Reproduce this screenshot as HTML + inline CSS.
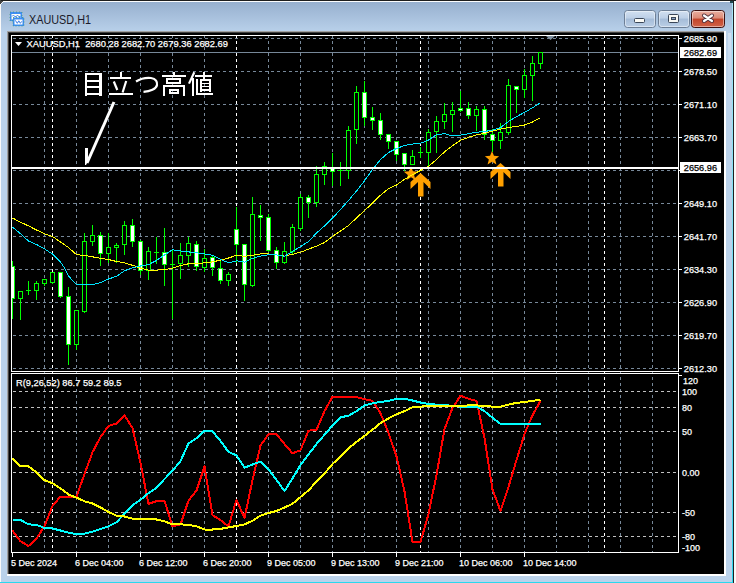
<!DOCTYPE html><html><head><meta charset="utf-8"><style>
html,body{margin:0;padding:0;width:736px;height:583px;overflow:hidden;background:#ffffff;}
svg{display:block;}
text{font-family:"Liberation Sans",sans-serif;}
</style></head><body>
<svg width="736" height="583" viewBox="0 0 736 583">
<defs>
<linearGradient id="tg" x1="0" y1="0" x2="0" y2="1"><stop offset="0" stop-color="#97b0cf"/><stop offset="1" stop-color="#bad2eb"/></linearGradient>
<linearGradient id="bg1" x1="0" y1="0" x2="0" y2="1"><stop offset="0" stop-color="#d3e1f1"/><stop offset="0.45" stop-color="#bccfe6"/><stop offset="0.5" stop-color="#a5bcd8"/><stop offset="1" stop-color="#bcd0e7"/></linearGradient>
<linearGradient id="bg2" x1="0" y1="0" x2="0" y2="1"><stop offset="0" stop-color="#eab0a2"/><stop offset="0.45" stop-color="#dc8a76"/><stop offset="0.5" stop-color="#c3452b"/><stop offset="1" stop-color="#d0644a"/></linearGradient>
<clipPath id="cm"><rect x="12" y="36" width="666" height="335"/></clipPath>
<clipPath id="ci"><rect x="12" y="374" width="666" height="178"/></clipPath>
</defs>
<linearGradient id="rg" x1="0" y1="0" x2="0" y2="1"><stop offset="0" stop-color="#a8e6f8"/><stop offset="1" stop-color="#2ed6ef"/></linearGradient>
<rect x="0" y="0" width="736" height="583" fill="#f4f4f4"/>
<rect x="0" y="0" width="734" height="583" fill="#bad2eb"/>
<rect x="0" y="2" width="734" height="31" fill="url(#tg)"/>
<rect x="0" y="0" width="736" height="1" fill="#1e1e1e"/>
<rect x="0" y="0" width="1" height="4" fill="#404040"/>
<rect x="3" y="1" width="727" height="1" fill="#fcfdfe"/>
<rect x="1" y="3" width="1" height="1" fill="#e8f0f8"/>
<rect x="2" y="2" width="1" height="1" fill="#e8f0f8"/>
<rect x="1" y="1" width="2" height="1" fill="#505050"/>
<rect x="1" y="2" width="1" height="1" fill="#505050"/>
<rect x="0" y="4" width="1" height="579" fill="#fafafa"/>
<linearGradient id="band" x1="0" y1="0" x2="0" y2="1"><stop offset="0" stop-color="#d4e4f4" stop-opacity="0.9"/><stop offset="1" stop-color="#bad2eb" stop-opacity="0"/></linearGradient>
<rect x="728" y="33" width="3" height="90" fill="url(#band)"/>
<rect x="732" y="3" width="1" height="580" fill="url(#rg)"/>
<rect x="733" y="0" width="1" height="583" fill="#202020"/>
<rect x="730" y="1" width="3" height="2" fill="#204850"/>
<rect x="734" y="1" width="2" height="582" fill="#f8f8f8"/>
<rect x="0" y="582" width="733" height="1" fill="#2ad8ee"/>
<rect x="7" y="31" width="719" height="545" fill="#ffffff"/>
<rect x="7" y="31" width="717" height="1" fill="#a0a0a0"/>
<rect x="7" y="31" width="1" height="543" fill="#a0a0a0"/>
<rect x="8" y="32" width="716" height="1" fill="#404040"/>
<rect x="8" y="32" width="1" height="542" fill="#404040"/>
<rect x="9" y="33" width="715" height="541" fill="#000000"/>
<rect x="10" y="12" width="12" height="9" fill="#3e8ef4"/>
<rect x="10" y="12" width="12" height="9" fill="none" stroke="#3a9a6a" stroke-width="1" stroke-dasharray="1 2" opacity="0.7"/>
<rect x="11.5" y="14" width="9" height="5.5" fill="#fffef4"/>
<path d="M12 16.5 L13.5 15 L14.5 16.5 L16.5 16.5 L17.5 15 L18.5 16.5 L20.5 16.5" stroke="#4a8ef0" stroke-width="1" fill="none"/>
<rect x="13" y="17.5" width="11" height="8.5" fill="#3e8ef4"/>
<rect x="13" y="17.5" width="11" height="8.5" fill="none" stroke="#3a9a6a" stroke-width="1" stroke-dasharray="1 2" opacity="0.7"/>
<rect x="14.5" y="19.5" width="8" height="5" fill="#ffffff"/>
<path d="M15.3 20.3 L17.3 23.3 L18.8 20.8 L20.3 23.3 L21.8 21.3" stroke="#3b7de8" stroke-width="1" fill="none"/>
<text x="29" y="23.9" font-size="12.5" fill="#1a1a2a" textLength="62" lengthAdjust="spacingAndGlyphs">XAUUSD,H1</text>
<rect x="624.5" y="10.5" width="31" height="17" rx="3" ry="3" fill="url(#bg1)" stroke="#6d7f96"/>
<rect x="625.5" y="11.5" width="29" height="15" rx="2" ry="2" fill="none" stroke="rgba(255,255,255,0.45)"/>
<rect x="658.5" y="10.5" width="31" height="17" rx="3" ry="3" fill="url(#bg1)" stroke="#6d7f96"/>
<rect x="659.5" y="11.5" width="29" height="15" rx="2" ry="2" fill="none" stroke="rgba(255,255,255,0.45)"/>
<rect x="691.5" y="10.5" width="33" height="17" rx="3" ry="3" fill="url(#bg2)" stroke="#3c1010"/>
<rect x="692.5" y="11.5" width="31" height="15" rx="2" ry="2" fill="none" stroke="rgba(255,255,255,0.45)"/>
<rect x="634.5" y="18.5" width="10" height="4" rx="1" fill="#fbfbf6" stroke="#3a4658"/>
<rect x="668.5" y="14.5" width="10" height="8" rx="1" fill="#f8f8f4" stroke="#3a4658" stroke-width="1"/>
<rect x="671.5" y="17.5" width="4" height="2" fill="#8aa0c0" stroke="#3a4658" stroke-width="1"/>
<path d="M704 15.5 L712 21 M712 15.5 L704 21" stroke="#50303a" stroke-width="4" stroke-linecap="round"/>
<path d="M704 15.5 L712 21 M712 15.5 L704 21" stroke="#ffffff" stroke-width="2.2" stroke-linecap="round"/>
<g shape-rendering="crispEdges">
<line x1="13" y1="38.5" x2="678" y2="38.5" stroke="#778899" stroke-dasharray="3 3"/>
<line x1="13" y1="71.5" x2="678" y2="71.5" stroke="#778899" stroke-dasharray="3 3"/>
<line x1="13" y1="104.5" x2="678" y2="104.5" stroke="#778899" stroke-dasharray="3 3"/>
<line x1="13" y1="137.5" x2="678" y2="137.5" stroke="#778899" stroke-dasharray="3 3"/>
<line x1="13" y1="170.5" x2="678" y2="170.5" stroke="#778899" stroke-dasharray="3 3"/>
<line x1="13" y1="203.5" x2="678" y2="203.5" stroke="#778899" stroke-dasharray="3 3"/>
<line x1="13" y1="236.5" x2="678" y2="236.5" stroke="#778899" stroke-dasharray="3 3"/>
<line x1="13" y1="269.5" x2="678" y2="269.5" stroke="#778899" stroke-dasharray="3 3"/>
<line x1="13" y1="302.5" x2="678" y2="302.5" stroke="#778899" stroke-dasharray="3 3"/>
<line x1="13" y1="335.5" x2="678" y2="335.5" stroke="#778899" stroke-dasharray="3 3"/>
<line x1="13" y1="368.5" x2="678" y2="368.5" stroke="#778899" stroke-dasharray="3 3"/>
<line x1="44.5" y1="35" x2="44.5" y2="371" stroke="#778899" stroke-dasharray="3 3"/>
<line x1="44.5" y1="371" x2="44.5" y2="552" stroke="#778899" stroke-dasharray="3 3"/>
<line x1="76.5" y1="35" x2="76.5" y2="371" stroke="#778899" stroke-dasharray="3 3"/>
<line x1="76.5" y1="371" x2="76.5" y2="552" stroke="#778899" stroke-dasharray="3 3"/>
<line x1="108.5" y1="35" x2="108.5" y2="371" stroke="#778899" stroke-dasharray="3 3"/>
<line x1="108.5" y1="371" x2="108.5" y2="552" stroke="#778899" stroke-dasharray="3 3"/>
<line x1="140.5" y1="35" x2="140.5" y2="371" stroke="#778899" stroke-dasharray="3 3"/>
<line x1="140.5" y1="371" x2="140.5" y2="552" stroke="#778899" stroke-dasharray="3 3"/>
<line x1="172.5" y1="35" x2="172.5" y2="371" stroke="#778899" stroke-dasharray="3 3"/>
<line x1="172.5" y1="371" x2="172.5" y2="552" stroke="#778899" stroke-dasharray="3 3"/>
<line x1="204.5" y1="35" x2="204.5" y2="371" stroke="#778899" stroke-dasharray="3 3"/>
<line x1="204.5" y1="371" x2="204.5" y2="552" stroke="#778899" stroke-dasharray="3 3"/>
<line x1="236.5" y1="35" x2="236.5" y2="371" stroke="#778899" stroke-dasharray="3 3"/>
<line x1="236.5" y1="371" x2="236.5" y2="552" stroke="#778899" stroke-dasharray="3 3"/>
<line x1="268.5" y1="35" x2="268.5" y2="371" stroke="#778899" stroke-dasharray="3 3"/>
<line x1="268.5" y1="371" x2="268.5" y2="552" stroke="#778899" stroke-dasharray="3 3"/>
<line x1="300.5" y1="35" x2="300.5" y2="371" stroke="#778899" stroke-dasharray="3 3"/>
<line x1="300.5" y1="371" x2="300.5" y2="552" stroke="#778899" stroke-dasharray="3 3"/>
<line x1="332.5" y1="35" x2="332.5" y2="371" stroke="#778899" stroke-dasharray="3 3"/>
<line x1="332.5" y1="371" x2="332.5" y2="552" stroke="#778899" stroke-dasharray="3 3"/>
<line x1="364.5" y1="35" x2="364.5" y2="371" stroke="#778899" stroke-dasharray="3 3"/>
<line x1="364.5" y1="371" x2="364.5" y2="552" stroke="#778899" stroke-dasharray="3 3"/>
<line x1="396.5" y1="35" x2="396.5" y2="371" stroke="#778899" stroke-dasharray="3 3"/>
<line x1="396.5" y1="371" x2="396.5" y2="552" stroke="#778899" stroke-dasharray="3 3"/>
<line x1="428.5" y1="35" x2="428.5" y2="371" stroke="#778899" stroke-dasharray="3 3"/>
<line x1="428.5" y1="371" x2="428.5" y2="552" stroke="#778899" stroke-dasharray="3 3"/>
<line x1="460.5" y1="35" x2="460.5" y2="371" stroke="#778899" stroke-dasharray="3 3"/>
<line x1="460.5" y1="371" x2="460.5" y2="552" stroke="#778899" stroke-dasharray="3 3"/>
<line x1="492.5" y1="35" x2="492.5" y2="371" stroke="#778899" stroke-dasharray="3 3"/>
<line x1="492.5" y1="371" x2="492.5" y2="552" stroke="#778899" stroke-dasharray="3 3"/>
<line x1="524.5" y1="35" x2="524.5" y2="371" stroke="#778899" stroke-dasharray="3 3"/>
<line x1="524.5" y1="371" x2="524.5" y2="552" stroke="#778899" stroke-dasharray="3 3"/>
<line x1="556.5" y1="35" x2="556.5" y2="371" stroke="#778899" stroke-dasharray="3 3"/>
<line x1="556.5" y1="371" x2="556.5" y2="552" stroke="#778899" stroke-dasharray="3 3"/>
<line x1="588.5" y1="35" x2="588.5" y2="371" stroke="#778899" stroke-dasharray="3 3"/>
<line x1="588.5" y1="371" x2="588.5" y2="552" stroke="#778899" stroke-dasharray="3 3"/>
<line x1="620.5" y1="35" x2="620.5" y2="371" stroke="#778899" stroke-dasharray="3 3"/>
<line x1="620.5" y1="371" x2="620.5" y2="552" stroke="#778899" stroke-dasharray="3 3"/>
<line x1="652.5" y1="35" x2="652.5" y2="371" stroke="#778899" stroke-dasharray="3 3"/>
<line x1="652.5" y1="371" x2="652.5" y2="552" stroke="#778899" stroke-dasharray="3 3"/>
<line x1="13" y1="391.5" x2="678" y2="391.5" stroke="#c0c0c0" stroke-dasharray="3 3"/>
<line x1="13" y1="407.5" x2="678" y2="407.5" stroke="#c0c0c0" stroke-dasharray="3 3"/>
<line x1="13" y1="431.5" x2="678" y2="431.5" stroke="#c0c0c0" stroke-dasharray="3 3"/>
<line x1="13" y1="472.5" x2="678" y2="472.5" stroke="#c0c0c0" stroke-dasharray="3 3"/>
<line x1="13" y1="512.5" x2="678" y2="512.5" stroke="#c0c0c0" stroke-dasharray="3 3"/>
<line x1="13" y1="536.5" x2="678" y2="536.5" stroke="#c0c0c0" stroke-dasharray="3 3"/>
<line x1="52.5" y1="35" x2="52.5" y2="371" stroke="#ffffff" stroke-dasharray="3 3"/>
<line x1="52.5" y1="371" x2="52.5" y2="552" stroke="#ffffff" stroke-dasharray="3 3"/>
<line x1="236.5" y1="35" x2="236.5" y2="371" stroke="#ffffff" stroke-dasharray="3 3"/>
<line x1="236.5" y1="371" x2="236.5" y2="552" stroke="#ffffff" stroke-dasharray="3 3"/>
<line x1="420.5" y1="35" x2="420.5" y2="371" stroke="#ffffff" stroke-dasharray="3 3"/>
<line x1="420.5" y1="371" x2="420.5" y2="552" stroke="#ffffff" stroke-dasharray="3 3"/>
<line x1="604.5" y1="35" x2="604.5" y2="371" stroke="#ffffff" stroke-dasharray="3 3"/>
<line x1="604.5" y1="371" x2="604.5" y2="552" stroke="#ffffff" stroke-dasharray="3 3"/>
</g>
<rect x="12" y="52" width="666" height="1" fill="#778899"/>
<g shape-rendering="crispEdges" clip-path="url(#cm)">
<rect x="12" y="261" width="1" height="58" fill="#00ff00"/>
<rect x="10.5" y="266.5" width="4" height="32" fill="#ffffff" stroke="#00ff00"/>
<rect x="20" y="291" width="1" height="29" fill="#00ff00"/>
<rect x="18.5" y="291.5" width="4" height="7" fill="#000000" stroke="#00ff00"/>
<rect x="28" y="281" width="1" height="14" fill="#00ff00"/>
<rect x="26" y="290" width="5" height="1" fill="#00ff00"/>
<rect x="36" y="281" width="1" height="19" fill="#00ff00"/>
<rect x="34.5" y="283.5" width="4" height="7" fill="#000000" stroke="#00ff00"/>
<rect x="44" y="279" width="1" height="7" fill="#00ff00"/>
<rect x="42.5" y="279.5" width="4" height="4" fill="#000000" stroke="#00ff00"/>
<rect x="52" y="272" width="1" height="12" fill="#00ff00"/>
<rect x="50.5" y="272.5" width="4" height="10" fill="#000000" stroke="#00ff00"/>
<rect x="60" y="272" width="1" height="26" fill="#00ff00"/>
<rect x="58.5" y="272.5" width="4" height="24" fill="#ffffff" stroke="#00ff00"/>
<rect x="68" y="287" width="1" height="78" fill="#00ff00"/>
<rect x="66.5" y="296.5" width="4" height="48" fill="#ffffff" stroke="#00ff00"/>
<rect x="76" y="310" width="1" height="40" fill="#00ff00"/>
<rect x="74.5" y="310.5" width="4" height="34" fill="#000000" stroke="#00ff00"/>
<rect x="84" y="233" width="1" height="80" fill="#00ff00"/>
<rect x="82.5" y="241.5" width="4" height="70" fill="#000000" stroke="#00ff00"/>
<rect x="92" y="225" width="1" height="21" fill="#00ff00"/>
<rect x="90.5" y="235.5" width="4" height="6" fill="#000000" stroke="#00ff00"/>
<rect x="100" y="232" width="1" height="34" fill="#00ff00"/>
<rect x="98.5" y="235.5" width="4" height="18" fill="#ffffff" stroke="#00ff00"/>
<rect x="108" y="233" width="1" height="30" fill="#00ff00"/>
<rect x="106.5" y="247.5" width="4" height="6" fill="#000000" stroke="#00ff00"/>
<rect x="116" y="243" width="1" height="20" fill="#00ff00"/>
<rect x="114.5" y="245.5" width="4" height="2" fill="#000000" stroke="#00ff00"/>
<rect x="124" y="221" width="1" height="34" fill="#00ff00"/>
<rect x="122.5" y="225.5" width="4" height="19" fill="#000000" stroke="#00ff00"/>
<rect x="132" y="219" width="1" height="28" fill="#00ff00"/>
<rect x="130.5" y="225.5" width="4" height="16" fill="#ffffff" stroke="#00ff00"/>
<rect x="140" y="240" width="1" height="35" fill="#00ff00"/>
<rect x="138.5" y="241.5" width="4" height="29" fill="#ffffff" stroke="#00ff00"/>
<rect x="148" y="247" width="1" height="33" fill="#00ff00"/>
<rect x="146.5" y="251.5" width="4" height="19" fill="#000000" stroke="#00ff00"/>
<rect x="156" y="237" width="1" height="27" fill="#00ff00"/>
<rect x="154" y="252" width="5" height="1" fill="#00ff00"/>
<rect x="164" y="228" width="1" height="58" fill="#00ff00"/>
<rect x="162.5" y="252.5" width="4" height="12" fill="#ffffff" stroke="#00ff00"/>
<rect x="172" y="250" width="1" height="69" fill="#00ff00"/>
<rect x="170" y="264" width="5" height="1" fill="#00ff00"/>
<rect x="180" y="243" width="1" height="36" fill="#00ff00"/>
<rect x="178.5" y="255.5" width="4" height="8" fill="#000000" stroke="#00ff00"/>
<rect x="188" y="237" width="1" height="30" fill="#00ff00"/>
<rect x="186.5" y="243.5" width="4" height="12" fill="#000000" stroke="#00ff00"/>
<rect x="196" y="241" width="1" height="30" fill="#00ff00"/>
<rect x="194.5" y="244.5" width="4" height="22" fill="#ffffff" stroke="#00ff00"/>
<rect x="204" y="249" width="1" height="23" fill="#00ff00"/>
<rect x="202.5" y="258.5" width="4" height="9" fill="#000000" stroke="#00ff00"/>
<rect x="212" y="255" width="1" height="21" fill="#00ff00"/>
<rect x="210.5" y="257.5" width="4" height="10" fill="#ffffff" stroke="#00ff00"/>
<rect x="220" y="260" width="1" height="24" fill="#00ff00"/>
<rect x="218.5" y="268.5" width="4" height="12" fill="#ffffff" stroke="#00ff00"/>
<rect x="228" y="272" width="1" height="14" fill="#00ff00"/>
<rect x="226.5" y="274.5" width="4" height="6" fill="#000000" stroke="#00ff00"/>
<rect x="236" y="207" width="1" height="56" fill="#00ff00"/>
<rect x="234.5" y="229.5" width="4" height="15" fill="#ffffff" stroke="#00ff00"/>
<rect x="244" y="244" width="1" height="57" fill="#00ff00"/>
<rect x="242.5" y="244.5" width="4" height="40" fill="#ffffff" stroke="#00ff00"/>
<rect x="252" y="197" width="1" height="90" fill="#00ff00"/>
<rect x="250.5" y="214.5" width="4" height="71" fill="#000000" stroke="#00ff00"/>
<rect x="260" y="205" width="1" height="36" fill="#00ff00"/>
<rect x="258.5" y="215.5" width="4" height="2" fill="#ffffff" stroke="#00ff00"/>
<rect x="268" y="214" width="1" height="38" fill="#00ff00"/>
<rect x="266.5" y="217.5" width="4" height="33" fill="#ffffff" stroke="#00ff00"/>
<rect x="276" y="247" width="1" height="22" fill="#00ff00"/>
<rect x="274.5" y="250.5" width="4" height="12" fill="#ffffff" stroke="#00ff00"/>
<rect x="284" y="242" width="1" height="22" fill="#00ff00"/>
<rect x="282.5" y="251.5" width="4" height="11" fill="#000000" stroke="#00ff00"/>
<rect x="292" y="224" width="1" height="30" fill="#00ff00"/>
<rect x="290.5" y="227.5" width="4" height="24" fill="#000000" stroke="#00ff00"/>
<rect x="300" y="194" width="1" height="37" fill="#00ff00"/>
<rect x="298.5" y="197.5" width="4" height="31" fill="#000000" stroke="#00ff00"/>
<rect x="308" y="195" width="1" height="23" fill="#00ff00"/>
<rect x="306.5" y="197.5" width="4" height="5" fill="#ffffff" stroke="#00ff00"/>
<rect x="316" y="166" width="1" height="41" fill="#00ff00"/>
<rect x="314.5" y="174.5" width="4" height="28" fill="#000000" stroke="#00ff00"/>
<rect x="324" y="162" width="1" height="23" fill="#00ff00"/>
<rect x="322.5" y="166.5" width="4" height="8" fill="#000000" stroke="#00ff00"/>
<rect x="332" y="153" width="1" height="33" fill="#00ff00"/>
<rect x="330.5" y="167.5" width="4" height="4" fill="#ffffff" stroke="#00ff00"/>
<rect x="340" y="162" width="1" height="24" fill="#00ff00"/>
<rect x="338" y="170" width="5" height="1" fill="#00ff00"/>
<rect x="348" y="126" width="1" height="53" fill="#00ff00"/>
<rect x="346.5" y="130.5" width="4" height="40" fill="#000000" stroke="#00ff00"/>
<rect x="356" y="86" width="1" height="58" fill="#00ff00"/>
<rect x="354.5" y="92.5" width="4" height="37" fill="#000000" stroke="#00ff00"/>
<rect x="364" y="81" width="1" height="45" fill="#00ff00"/>
<rect x="362.5" y="92.5" width="4" height="25" fill="#ffffff" stroke="#00ff00"/>
<rect x="372" y="107" width="1" height="23" fill="#00ff00"/>
<rect x="370.5" y="117.5" width="4" height="3" fill="#ffffff" stroke="#00ff00"/>
<rect x="380" y="113" width="1" height="27" fill="#00ff00"/>
<rect x="378.5" y="120.5" width="4" height="14" fill="#ffffff" stroke="#00ff00"/>
<rect x="388" y="134" width="1" height="15" fill="#00ff00"/>
<rect x="386.5" y="134.5" width="4" height="7" fill="#ffffff" stroke="#00ff00"/>
<rect x="396" y="141" width="1" height="20" fill="#00ff00"/>
<rect x="394.5" y="141.5" width="4" height="13" fill="#ffffff" stroke="#00ff00"/>
<rect x="404" y="153" width="1" height="18" fill="#00ff00"/>
<rect x="402.5" y="153.5" width="4" height="11" fill="#ffffff" stroke="#00ff00"/>
<rect x="412" y="150" width="1" height="15" fill="#00ff00"/>
<rect x="410.5" y="156.5" width="4" height="8" fill="#000000" stroke="#00ff00"/>
<rect x="420" y="147" width="1" height="11" fill="#00ff00"/>
<rect x="418" y="152" width="5" height="1" fill="#00ff00"/>
<rect x="428" y="129" width="1" height="38" fill="#00ff00"/>
<rect x="426.5" y="132.5" width="4" height="20" fill="#000000" stroke="#00ff00"/>
<rect x="436" y="116" width="1" height="37" fill="#00ff00"/>
<rect x="434.5" y="121.5" width="4" height="10" fill="#000000" stroke="#00ff00"/>
<rect x="444" y="103" width="1" height="26" fill="#00ff00"/>
<rect x="442.5" y="114.5" width="4" height="7" fill="#000000" stroke="#00ff00"/>
<rect x="452" y="102" width="1" height="30" fill="#00ff00"/>
<rect x="450.5" y="110.5" width="4" height="4" fill="#000000" stroke="#00ff00"/>
<rect x="460" y="91" width="1" height="21" fill="#00ff00"/>
<rect x="458.5" y="108.5" width="4" height="2" fill="#ffffff" stroke="#00ff00"/>
<rect x="468" y="102" width="1" height="17" fill="#00ff00"/>
<rect x="466.5" y="108.5" width="4" height="7" fill="#ffffff" stroke="#00ff00"/>
<rect x="476" y="106" width="1" height="25" fill="#00ff00"/>
<rect x="474.5" y="109.5" width="4" height="6" fill="#000000" stroke="#00ff00"/>
<rect x="484" y="106" width="1" height="34" fill="#00ff00"/>
<rect x="482.5" y="109.5" width="4" height="25" fill="#ffffff" stroke="#00ff00"/>
<rect x="492" y="129" width="1" height="23" fill="#00ff00"/>
<rect x="490.5" y="134.5" width="4" height="6" fill="#ffffff" stroke="#00ff00"/>
<rect x="500" y="123" width="1" height="26" fill="#00ff00"/>
<rect x="498.5" y="132.5" width="4" height="8" fill="#000000" stroke="#00ff00"/>
<rect x="508" y="79" width="1" height="56" fill="#00ff00"/>
<rect x="506.5" y="85.5" width="4" height="47" fill="#000000" stroke="#00ff00"/>
<rect x="516" y="86" width="1" height="27" fill="#00ff00"/>
<rect x="514.5" y="86.5" width="4" height="3" fill="#ffffff" stroke="#00ff00"/>
<rect x="524" y="69" width="1" height="29" fill="#00ff00"/>
<rect x="522.5" y="75.5" width="4" height="14" fill="#000000" stroke="#00ff00"/>
<rect x="532" y="56" width="1" height="45" fill="#00ff00"/>
<rect x="530.5" y="63.5" width="4" height="12" fill="#000000" stroke="#00ff00"/>
<rect x="540" y="52" width="1" height="17" fill="#00ff00"/>
<rect x="538.5" y="52.5" width="4" height="11" fill="#000000" stroke="#00ff00"/>
</g>
<polygon points="411.00,166.50 412.94,171.33 418.13,171.68 414.14,175.02 415.41,180.07 411.00,177.30 406.59,180.07 407.86,175.02 403.87,171.68 409.06,171.33" fill="#ffa000"/>
<polygon points="420.50,173.00 430.50,182.00 430.50,189.00 423.50,182.00 423.50,196.50 418.00,196.50 418.00,182.00 410.50,189.00 410.50,182.00" fill="#ffa000"/>
<polygon points="492.00,151.00 493.94,155.83 499.13,156.18 495.14,159.52 496.41,164.57 492.00,161.80 487.59,164.57 488.86,159.52 484.87,156.18 490.06,155.83" fill="#ffa000"/>
<polygon points="500.50,163.00 510.50,172.00 510.50,179.00 503.50,172.00 503.50,186.50 498.00,186.50 498.00,172.00 490.50,179.00 490.50,172.00" fill="#ffa000"/>
<g clip-path="url(#cm)">
<polyline points="12.5,218.0 20.5,222.2 28.5,225.9 36.5,230.0 44.5,233.8 52.5,236.5 60.5,242.0 68.5,247.5 76.5,254.7 84.5,255.5 92.5,256.8 100.5,258.4 108.5,259.5 116.5,261.5 124.5,262.8 132.5,265.3 140.5,268.0 148.5,270.1 156.5,270.1 164.5,269.7 172.5,268.3 180.5,265.5 188.5,263.8 196.5,263.8 204.5,262.8 212.5,261.9 220.5,260.1 228.5,258.0 236.5,255.3 244.5,256.4 252.5,255.2 260.5,253.9 268.5,253.9 276.5,255.0 284.5,256.1 292.5,254.3 300.5,252.2 308.5,249.2 316.5,246.1 324.5,242.6 332.5,236.5 340.5,231.0 348.5,225.5 356.5,218.0 364.5,210.5 372.5,203.2 380.5,195.2 388.5,188.7 396.5,185.0 404.5,179.3 412.5,174.7 420.5,170.5 428.5,166.3 436.5,159.5 444.5,151.9 452.5,145.8 460.5,140.3 468.5,137.3 476.5,134.8 484.5,133.4 492.5,131.1 500.5,129.1 508.5,127.4 516.5,126.6 524.5,125.0 532.5,122.0 540.5,117.8" fill="none" stroke="#ffff00" stroke-width="1" stroke-linejoin="round" shape-rendering="crispEdges"/>
<polyline points="12.5,227.0 20.5,233.8 28.5,241.0 36.5,244.5 44.5,248.9 52.5,254.1 60.5,261.9 64.5,268.1 68.5,276.1 76.5,284.5 84.5,284.8 92.5,284.8 100.5,282.5 108.5,279.0 116.5,276.3 124.5,270.8 132.5,267.7 140.5,266.0 148.5,264.6 156.5,260.5 164.5,255.0 172.5,249.8 180.5,250.9 188.5,251.9 196.5,252.8 204.5,253.9 212.5,255.3 220.5,259.4 228.5,262.8 236.5,260.8 244.5,262.1 252.5,258.4 260.5,256.1 268.5,254.7 276.5,255.0 284.5,256.3 292.5,251.5 300.5,246.7 308.5,241.5 316.5,233.0 324.5,225.9 332.5,218.2 340.5,209.5 348.5,200.5 356.5,191.0 364.5,180.8 372.5,169.5 380.5,159.5 388.5,152.5 396.5,148.5 404.5,145.5 412.5,144.1 420.5,143.3 428.5,140.0 436.5,134.8 444.5,133.7 452.5,135.9 460.5,135.1 468.5,133.7 476.5,132.3 484.5,131.5 492.5,130.2 500.5,127.7 508.5,121.5 516.5,116.7 524.5,112.4 532.5,107.8 540.5,102.7" fill="none" stroke="#00e5ff" stroke-width="1" stroke-linejoin="round" shape-rendering="crispEdges"/>
</g>
<rect x="12" y="167" width="666" height="2" fill="#ffffff"/>
<path d="M114 102 L87 163" stroke="#ffffff" stroke-width="3" fill="none"/>
<polygon points="85,148 88,148 88,158 92,154 86,165 85,165" fill="#ffffff"/>
<g shape-rendering="crispEdges">
<rect x="11.5" y="35.5" width="667" height="336" fill="none" stroke="#ffffff"/>
<rect x="11.5" y="373.5" width="667" height="179" fill="none" stroke="#ffffff"/>
<rect x="679" y="38" width="3" height="1" fill="#ffffff"/>
<rect x="679" y="71" width="3" height="1" fill="#ffffff"/>
<rect x="679" y="104" width="3" height="1" fill="#ffffff"/>
<rect x="679" y="137" width="3" height="1" fill="#ffffff"/>
<rect x="679" y="170" width="3" height="1" fill="#ffffff"/>
<rect x="679" y="203" width="3" height="1" fill="#ffffff"/>
<rect x="679" y="236" width="3" height="1" fill="#ffffff"/>
<rect x="679" y="269" width="3" height="1" fill="#ffffff"/>
<rect x="679" y="302" width="3" height="1" fill="#ffffff"/>
<rect x="679" y="335" width="3" height="1" fill="#ffffff"/>
<rect x="679" y="368" width="3" height="1" fill="#ffffff"/>
<rect x="679" y="375" width="3" height="1" fill="#ffffff"/>
<rect x="12" y="553" width="1" height="4" fill="#ffffff"/>
<rect x="76" y="553" width="1" height="4" fill="#ffffff"/>
<rect x="140" y="553" width="1" height="4" fill="#ffffff"/>
<rect x="204" y="553" width="1" height="4" fill="#ffffff"/>
<rect x="268" y="553" width="1" height="4" fill="#ffffff"/>
<rect x="332" y="553" width="1" height="4" fill="#ffffff"/>
<rect x="396" y="553" width="1" height="4" fill="#ffffff"/>
<rect x="460" y="553" width="1" height="4" fill="#ffffff"/>
<rect x="524" y="553" width="1" height="4" fill="#ffffff"/>
</g>
<text x="683.8" y="42" textLength="33.2" lengthAdjust="spacingAndGlyphs" font-size="9" fill="#ffffff" stroke="#ffffff" stroke-width="0.25">2685.90</text>
<text x="683.8" y="75" textLength="33.2" lengthAdjust="spacingAndGlyphs" font-size="9" fill="#ffffff" stroke="#ffffff" stroke-width="0.25">2678.50</text>
<text x="683.8" y="108" textLength="33.2" lengthAdjust="spacingAndGlyphs" font-size="9" fill="#ffffff" stroke="#ffffff" stroke-width="0.25">2671.10</text>
<text x="683.8" y="141" textLength="33.2" lengthAdjust="spacingAndGlyphs" font-size="9" fill="#ffffff" stroke="#ffffff" stroke-width="0.25">2663.70</text>
<text x="683.8" y="207" textLength="33.2" lengthAdjust="spacingAndGlyphs" font-size="9" fill="#ffffff" stroke="#ffffff" stroke-width="0.25">2649.10</text>
<text x="683.8" y="240" textLength="33.2" lengthAdjust="spacingAndGlyphs" font-size="9" fill="#ffffff" stroke="#ffffff" stroke-width="0.25">2641.70</text>
<text x="683.8" y="273" textLength="33.2" lengthAdjust="spacingAndGlyphs" font-size="9" fill="#ffffff" stroke="#ffffff" stroke-width="0.25">2634.30</text>
<text x="683.8" y="306" textLength="33.2" lengthAdjust="spacingAndGlyphs" font-size="9" fill="#ffffff" stroke="#ffffff" stroke-width="0.25">2626.90</text>
<text x="683.8" y="339" textLength="33.2" lengthAdjust="spacingAndGlyphs" font-size="9" fill="#ffffff" stroke="#ffffff" stroke-width="0.25">2619.70</text>
<text x="683.8" y="372" textLength="33.2" lengthAdjust="spacingAndGlyphs" font-size="9" fill="#ffffff" stroke="#ffffff" stroke-width="0.25">2612.30</text>
<rect x="680" y="47" width="41" height="11" fill="#ffffff"/>
<text x="683.8" y="56" textLength="33.2" lengthAdjust="spacingAndGlyphs" font-size="9" fill="#000000" stroke="#000000" stroke-width="0.25">2682.69</text>
<rect x="680" y="162" width="41" height="11" fill="#ffffff"/>
<text x="683.8" y="171" textLength="33.2" lengthAdjust="spacingAndGlyphs" font-size="9" fill="#000000" stroke="#000000" stroke-width="0.25">2656.96</text>
<text x="683" y="384" font-size="9" fill="#ffffff" stroke="#ffffff" stroke-width="0.25">120</text>
<text x="682" y="395" font-size="9" fill="#ffffff" stroke="#ffffff" stroke-width="0.25">100</text>
<text x="682" y="411" font-size="9" fill="#ffffff" stroke="#ffffff" stroke-width="0.25">80</text>
<text x="682" y="435" font-size="9" fill="#ffffff" stroke="#ffffff" stroke-width="0.25">50</text>
<text x="682" y="476" font-size="9" fill="#ffffff" stroke="#ffffff" stroke-width="0.25">0.00</text>
<text x="682" y="516" font-size="9" fill="#ffffff" stroke="#ffffff" stroke-width="0.25">-50</text>
<text x="682" y="540" font-size="9" fill="#ffffff" stroke="#ffffff" stroke-width="0.25">-80</text>
<text x="682" y="551" font-size="9" fill="#ffffff" stroke="#ffffff" stroke-width="0.25">-100</text>
<text x="11" y="566" font-size="9" fill="#ffffff" stroke="#ffffff" stroke-width="0.25">5 Dec 2024</text>
<text x="75" y="566" font-size="9" fill="#ffffff" stroke="#ffffff" stroke-width="0.25">6 Dec 04:00</text>
<text x="139" y="566" font-size="9" fill="#ffffff" stroke="#ffffff" stroke-width="0.25">6 Dec 12:00</text>
<text x="203" y="566" font-size="9" fill="#ffffff" stroke="#ffffff" stroke-width="0.25">6 Dec 20:00</text>
<text x="267" y="566" font-size="9" fill="#ffffff" stroke="#ffffff" stroke-width="0.25">9 Dec 05:00</text>
<text x="331" y="566" font-size="9" fill="#ffffff" stroke="#ffffff" stroke-width="0.25">9 Dec 13:00</text>
<text x="395" y="566" font-size="9" fill="#ffffff" stroke="#ffffff" stroke-width="0.25">9 Dec 21:00</text>
<text x="459" y="566" font-size="9" fill="#ffffff" stroke="#ffffff" stroke-width="0.25">10 Dec 06:00</text>
<text x="523" y="566" font-size="9" fill="#ffffff" stroke="#ffffff" stroke-width="0.25">10 Dec 14:00</text>
<polygon points="15,42 22,42 18.5,46" fill="#ffffff"/>
<text x="26.5" y="46.8" font-size="9" fill="#ffffff" stroke="#ffffff" stroke-width="0.25" xml:space="preserve" textLength="201.5" lengthAdjust="spacingAndGlyphs">XAUUSD,H1  2680.28 2682.70 2679.36 2682.69</text>
<text x="16" y="386.2" font-size="9" fill="#ffffff" stroke="#ffffff" stroke-width="0.25" textLength="105.5" lengthAdjust="spacingAndGlyphs">R(9,26,52) 86.7 59.2 89.5</text>
<polygon points="546,36 555,36 550.5,40" fill="#8090a0"/>
<g clip-path="url(#ci)">
<polyline points="12.5,530.5 20.5,541.2 28.5,546 36.5,538.8 44.5,526 52.5,505.8 60.5,496.6 68.5,496.6 76.5,496.6 84.5,474 92.5,452.3 100.5,437 108.5,426 116.5,423.5 124.5,415.3 132.5,428 140.5,463 148.5,503.8 156.5,501.2 164.5,500.7 172.5,526.4 180.5,524.4 188.5,500.7 196.5,490.4 204.5,466.5 212.5,515.1 220.5,520.2 228.5,526.4 236.5,499.7 244.5,518.2 252.5,480 260.5,445.6 268.5,434.2 276.5,434.2 284.5,444 292.5,453.3 300.5,450.2 308.5,430.7 316.5,429.7 324.5,411.2 332.5,396.7 340.5,396.7 348.5,396.7 356.5,397.2 364.5,399.2 372.5,400.9 380.5,413.2 388.5,433 396.5,456.4 404.5,491.4 412.5,541.9 420.5,541.9 428.5,514 436.5,475 444.5,429 452.5,408 460.5,395.7 468.5,398.8 476.5,400.9 484.5,438 492.5,489.5 500.5,511 508.5,487 516.5,460 524.5,434 532.5,415.3 540.5,400.9" fill="none" stroke="#ff0000" stroke-width="2" stroke-linejoin="round" shape-rendering="crispEdges"/>
<polyline points="12.5,519.8 20.5,519.8 28.5,524.4 36.5,524.8 44.5,528 52.5,528.5 60.5,530.5 68.5,532.6 76.5,534.2 84.5,533.6 92.5,531.6 100.5,528.9 108.5,526.4 116.5,522.3 124.5,513.7 132.5,505.4 140.5,499.7 148.5,493.1 156.5,487.8 164.5,479 172.5,470.8 180.5,461 188.5,443.5 196.5,438.3 204.5,430.7 212.5,431.3 220.5,441 228.5,451.9 236.5,455.4 244.5,467.7 252.5,464.5 260.5,461.6 268.5,469.3 276.5,480 284.5,491 292.5,478.5 300.5,465 308.5,454.4 316.5,444 324.5,434.8 332.5,425.6 340.5,417.3 348.5,415.7 356.5,411.2 364.5,405.4 372.5,403.3 380.5,401.9 388.5,400.9 396.5,398.8 404.5,398.8 412.5,400.5 420.5,402.5 428.5,404 436.5,404.6 444.5,405 452.5,406 460.5,406.6 468.5,406.6 476.5,406.6 484.5,411.2 492.5,417.7 500.5,423.9 508.5,423.9 516.5,423.9 524.5,423.9 532.5,423.9 540.5,423.9" fill="none" stroke="#00ffff" stroke-width="2" stroke-linejoin="round" shape-rendering="crispEdges"/>
<polyline points="12.5,458.5 20.5,466.3 28.5,466.3 36.5,472.5 44.5,480.1 52.5,483.2 60.5,488.4 68.5,494.5 76.5,497.6 84.5,501.3 92.5,503.4 100.5,507.5 108.5,512 116.5,515.7 124.5,516.5 132.5,518.6 140.5,518.6 148.5,518.6 156.5,519.5 164.5,521.3 172.5,524.4 180.5,524.4 188.5,524.8 196.5,526.4 204.5,529.5 212.5,529.5 220.5,528.9 228.5,527.4 236.5,526 244.5,524.4 252.5,520.7 260.5,515.7 268.5,513 276.5,511 284.5,507.5 292.5,503.8 300.5,497 308.5,490.4 316.5,481.5 324.5,473.5 332.5,464 340.5,456.4 348.5,448.2 356.5,442 364.5,435.8 372.5,429.7 380.5,423.1 388.5,418.4 396.5,414.2 404.5,411.2 412.5,407.4 420.5,406.6 428.5,406 436.5,406 444.5,406 452.5,406 460.5,406 468.5,405.4 476.5,405.4 484.5,406 492.5,406.6 500.5,406.6 508.5,404.6 516.5,402.9 524.5,401.9 532.5,400.9 540.5,399.8" fill="none" stroke="#ffff00" stroke-width="2" stroke-linejoin="round" shape-rendering="crispEdges"/>
</g>
<g fill="#ffffff" shape-rendering="crispEdges">
<!-- 目 -->
<rect x="85" y="73" width="2" height="23"/>
<rect x="99" y="73" width="2.5" height="23"/>
<rect x="85" y="73" width="16" height="2"/>
<rect x="85" y="80" width="16" height="2"/>
<rect x="85" y="86" width="16" height="2"/>
<rect x="85" y="93" width="16" height="2"/>
<!-- 立 -->
<rect x="119.5" y="72" width="2" height="6"/>
<rect x="110" y="77" width="21" height="2"/>
<rect x="109" y="93" width="24" height="2"/>
<!-- 高 -->
<rect x="172.5" y="72" width="2" height="4"/>
<rect x="161.5" y="74.5" width="24" height="2"/>
<rect x="166" y="78" width="15" height="2"/>
<rect x="166" y="82" width="15" height="2"/>
<rect x="166" y="78" width="2" height="6"/>
<rect x="179" y="78" width="2" height="6"/>
<rect x="163" y="85" width="22" height="2"/>
<rect x="163" y="85" width="2" height="11"/>
<rect x="183" y="85" width="2" height="11"/>
<rect x="169" y="89" width="10" height="2"/>
<rect x="169" y="92" width="10" height="2"/>
<rect x="169" y="89" width="2" height="5"/>
<rect x="177" y="89" width="2" height="5"/>
<!-- 値 -->
<rect x="192" y="78" width="2" height="18"/>
<rect x="195" y="75" width="17" height="2"/>
<rect x="203" y="72" width="2" height="7"/>
<rect x="196" y="79" width="2" height="16"/>
<rect x="200.3" y="79" width="2" height="12.5"/>
<rect x="208.5" y="79" width="2" height="12.5"/>
<rect x="200.3" y="79" width="10.2" height="2"/>
<rect x="200.3" y="82.7" width="10.2" height="1.4"/>
<rect x="200.3" y="86" width="10.2" height="1.4"/>
<rect x="200.3" y="89.4" width="10.2" height="2"/>
<rect x="196" y="93" width="17" height="2"/>
</g>
<g stroke="#ffffff" stroke-width="2.2" fill="none">
<path d="M113.8 81.5 L117.3 90"/>
<path d="M126.2 81 L122.6 92.5"/>
<path d="M136 81.5 C140 79, 146 77.5, 151 78 C156 78.5, 157.5 82, 157 85 C156.3 89, 150 91.5, 143.5 91.8"/>
<path d="M194.3 72.3 L189 83.6"/>
</g>

</svg></body></html>
